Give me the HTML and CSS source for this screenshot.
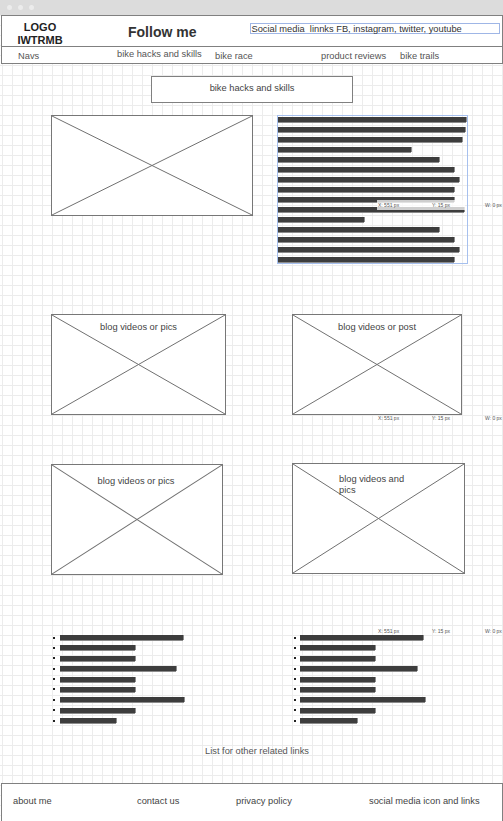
FILE: index.html
```html
<!DOCTYPE html>
<html>
<head>
<meta charset="utf-8">
<link rel="stylesheet" href="styles.css">
</head>
<body>
<div class="chrome"><span class="dot"></span><span class="dot"></span><span class="dot"></span></div>
<div class="site">
  <header class="header">
    <div class="top">
      <div class="logo">LOGO<br>IWTRMB</div>
      <div class="follow">Follow me</div>
      <div class="social">Social media&nbsp; linnks FB, instagram, twitter, youtube</div>
    </div>
    <nav class="nav">
      <span class="n1">Navs</span>
      <span class="n2">bike hacks and skills</span>
      <span class="n3">bike race</span>
      <span class="n4">product reviews</span>
      <span class="n5">bike trails</span>
    </nav>
  </header>

  <main class="main">
    <div class="title-box">bike hacks and skills</div>

    <div class="row row1">
      <div class="ph ph1">
        <svg class="x" viewBox="0 0 100 100" preserveAspectRatio="none"><line x1="0" y1="0" x2="100" y2="100" vector-effect="non-scaling-stroke"/><line x1="100" y1="0" x2="0" y2="100" vector-effect="non-scaling-stroke"/></svg>
      </div>
      <div class="textblock">
        <div class="bar" style="width:188px"></div>
        <div class="bar" style="width:187px"></div>
        <div class="bar" style="width:184px"></div>
        <div class="bar" style="width:133px"></div>
        <div class="bar" style="width:161px"></div>
        <div class="bar" style="width:176px"></div>
        <div class="bar" style="width:181px"></div>
        <div class="bar" style="width:176px"></div>
        <div class="bar" style="width:176px"></div>
        <div class="bar" style="width:186px"></div>
        <div class="bar" style="width:86px"></div>
        <div class="bar" style="width:161px"></div>
        <div class="bar" style="width:176px"></div>
        <div class="bar" style="width:181px"></div>
        <div class="bar" style="width:176px"></div>
      </div>
    </div>

    <div class="row row2">
      <div class="ph ph2">
        <svg class="x" viewBox="0 0 100 100" preserveAspectRatio="none"><line x1="0" y1="0" x2="100" y2="100" vector-effect="non-scaling-stroke"/><line x1="100" y1="0" x2="0" y2="100" vector-effect="non-scaling-stroke"/></svg>
        <span class="label">blog videos or pics</span>
      </div>
      <div class="ph ph3">
        <svg class="x" viewBox="0 0 100 100" preserveAspectRatio="none"><line x1="0" y1="0" x2="100" y2="100" vector-effect="non-scaling-stroke"/><line x1="100" y1="0" x2="0" y2="100" vector-effect="non-scaling-stroke"/></svg>
        <span class="label">blog videos or post</span>
      </div>
    </div>

    <div class="row row3">
      <div class="ph ph4">
        <svg class="x" viewBox="0 0 100 100" preserveAspectRatio="none"><line x1="0" y1="0" x2="100" y2="100" vector-effect="non-scaling-stroke"/><line x1="100" y1="0" x2="0" y2="100" vector-effect="non-scaling-stroke"/></svg>
        <span class="label label4">blog videos or pics</span>
      </div>
      <div class="ph ph5">
        <svg class="x" viewBox="0 0 100 100" preserveAspectRatio="none"><line x1="0" y1="0" x2="100" y2="100" vector-effect="non-scaling-stroke"/><line x1="100" y1="0" x2="0" y2="100" vector-effect="non-scaling-stroke"/></svg>
        <span class="label label5">blog videos and pics</span>
      </div>
    </div>

    <div class="lists">
      <ul class="blist left">
        <li><i></i><b style="width:123px"></b></li>
        <li><i></i><b style="width:75px"></b></li>
        <li><i></i><b style="width:75px"></b></li>
        <li><i></i><b style="width:116px"></b></li>
        <li><i></i><b style="width:75px"></b></li>
        <li><i></i><b style="width:75px"></b></li>
        <li><i></i><b style="width:124px"></b></li>
        <li><i></i><b style="width:75px"></b></li>
        <li><i></i><b style="width:56px"></b></li>
      </ul>
      <ul class="blist right">
        <li><i></i><b style="width:123px"></b></li>
        <li><i></i><b style="width:75px"></b></li>
        <li><i></i><b style="width:75px"></b></li>
        <li><i></i><b style="width:117px"></b></li>
        <li><i></i><b style="width:75px"></b></li>
        <li><i></i><b style="width:75px"></b></li>
        <li><i></i><b style="width:125px"></b></li>
        <li><i></i><b style="width:75px"></b></li>
        <li><i></i><b style="width:57px"></b></li>
      </ul>
    </div>

    <p class="caption">List for other related links</p>
  </main>

  <footer class="footer">
    <span class="f1">about me</span>
    <span class="f2">contact us</span>
    <span class="f3">privacy policy</span>
    <span class="f4">social media icon and links</span>
  </footer>
</div>

<div class="tip tip1"><span class="strip"></span><span class="tx">X: 551 px</span><span class="ty">Y: 15 px</span><span class="tw">W: 0 px</span></div>
<div class="tip tip2"><span class="tx">X: 551 px</span><span class="ty">Y: 15 px</span><span class="tw">W: 0 px</span></div>
<div class="tip tip3"><span class="tx">X: 551 px</span><span class="ty">Y: 15 px</span><span class="tw">W: 0 px</span></div>
</body>
</html>
```

FILE: styles.css
```css
* { box-sizing: border-box; }

html, body {
  margin: 0;
  padding: 0;
}

body {
  width: 503px;
  height: 821px;
  overflow: hidden;
  position: relative;
  font-family: "Liberation Sans", Arial, sans-serif;
  font-size: 9.3px;
  color: #444;
  background-color: #fff;
  background-image:
    linear-gradient(to right, #ececec 1px, transparent 1px),
    linear-gradient(to bottom, #ececec 1px, transparent 1px);
  background-size: 10px 10px;
  background-position: 2px 5px;
}

.chrome {
  height: 15px;
  background: #dcdcdc;
  display: flex;
  align-items: center;
  gap: 6px;
  padding-left: 7px;
}

.dot {
  width: 5px;
  height: 5px;
  border-radius: 50%;
  background: #ececec;
}

.site {
  margin-left: 1px;
  width: 502px;
}

.header {
  background: #fff;
  border: 1px solid #808080;
}

.top {
  display: flex;
  height: 31px;
  align-items: center;
  border-bottom: 1px solid #808080;
}

.logo {
  width: 76px;
  text-align: center;
  font-weight: bold;
  font-size: 11px;
  line-height: 13px;
  color: #222;
  padding-top: 5px;
}

.follow {
  margin-left: 50px;
  font-weight: bold;
  font-size: 14px;
  color: #333;
  padding-top: 1px;
}

.social {
  margin-left: 54px;
  align-self: flex-start;
  margin-top: 7px;
  width: 250px;
  height: 11px;
  border: 1px solid #9fb6e6;
  font-size: 9.3px;
  line-height: 10px;
  color: #333;
  white-space: nowrap;
}

.nav {
  display: grid;
  grid-template-columns: 99px 98px 106px 79px auto;
  align-items: center;
  height: 16px;
  padding-left: 16px;
  padding-top: 2px;
  color: #555;
  white-space: nowrap;
}

.nav .n2 { padding-bottom: 4px; }

.main {
  display: flex;
  flex-direction: column;
}

.title-box {
  margin: 12px 0 0 150px;
  width: 202px;
  height: 27px;
  border: 1px solid #808080;
  background: #fff;
  text-align: center;
  padding-top: 6px;
  line-height: 11px;
  color: #444;
}

.row {
  display: flex;
  align-items: flex-start;
  padding-left: 50px;
}

.row1 { margin-top: 12px; gap: 24px; }
.row2 { margin-top: 50px; gap: 66px; }
.row3 { margin-top: 48px; gap: 69px; }

.ph {
  position: relative;
  background: #fff;
  border: 1px solid #777;
}

.ph1 { width: 202px; height: 101px; }
.ph2 { width: 175px; height: 101px; }
.ph3 { width: 170px; height: 101px; }
.ph4 { width: 172px; height: 111px; margin-top: 1px; }
.ph5 { width: 173px; height: 111px; }

.x {
  position: absolute;
  left: 0;
  top: 0;
  width: 100%;
  height: 100%;
}

.x line {
  stroke: #707070;
  stroke-width: 1;
}

.label {
  position: absolute;
  left: 0;
  right: 0;
  top: 7px;
  text-align: center;
  line-height: 11px;
  color: #444;
}

.label4 { top: 11px; right: 2px; }

.label5 {
  left: 46px;
  right: auto;
  width: 70px;
  top: 10px;
  text-align: left;
}

.textblock {
  width: 191px;
  height: 149px;
  border: 1px solid #a6c0ee;
  display: flex;
  flex-direction: column;
  gap: 5px;
  padding-top: 1px;
}

.bar {
  height: 5px;
  background: #3d3d3d;
  box-shadow: 1px 0 0 #8c8c8c, 0 1px 0 #8c8c8c;
}

.lists {
  margin-top: 60px;
  display: flex;
}

.blist {
  list-style: none;
  margin: 0;
  padding: 0;
  display: flex;
  flex-direction: column;
  gap: 5.4px;
}

.blist.left { padding-left: 52px; width: 293px; }

.blist li {
  display: flex;
  align-items: center;
  height: 5px;
}

.blist i {
  width: 2px;
  height: 2px;
  background: #222;
  margin-right: 5px;
}

.blist.right i { margin-right: 4px; }

.blist b {
  display: block;
  height: 5px;
  background: #3d3d3d;
  box-shadow: 1px 0 0 #8c8c8c, 0 1px 0 #8c8c8c;
}

.caption {
  margin: 23px 0 0 10px;
  text-align: center;
  line-height: 11px;
  color: #555;
}

.footer {
  margin-top: 26px;
  height: 40px;
  background: #fff;
  border: 1px solid #808080;
  border-bottom: none;
  display: grid;
  grid-template-columns: 124px 99px 133px auto;
  padding: 12px 0 0 11px;
  line-height: 11px;
  color: #444;
  white-space: nowrap;
}

.tip {
  position: absolute;
  left: 0;
  width: 503px;
  height: 10px;
  font-size: 5px;
  line-height: 10px;
  color: #555;
  white-space: nowrap;
}

.tip1 { top: 200px; }
.tip2 { top: 413px; }
.tip3 { top: 626px; }

.tip .strip {
  position: absolute;
  left: 377px;
  top: 0;
  width: 88px;
  height: 10px;
  background: rgba(255, 255, 255, 0.75);
}

.tip .tx { position: absolute; left: 378px; }
.tip .ty { position: absolute; left: 432px; }
.tip .tw { position: absolute; left: 485px; }
```
